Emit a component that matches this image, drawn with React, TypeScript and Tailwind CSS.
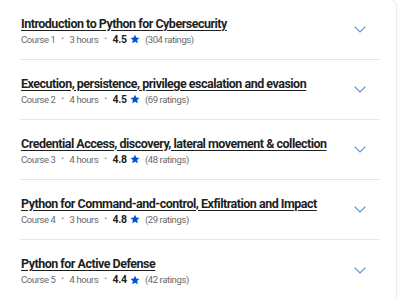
import React from "react";

const courses = [
  { title: "Introduction to Python for Cybersecurity", n: 1, hours: 3, rating: "4.5", count: 304 },
  { title: "Execution, persistence, privilege escalation and evasion", n: 2, hours: 4, rating: "4.5", count: 69 },
  { title: "Credential Access, discovery, lateral movement & collection", n: 3, hours: 4, rating: "4.8", count: 48 },
  { title: "Python for Command-and-control, Exfiltration and Impact", n: 4, hours: 3, rating: "4.8", count: 29 },
  { title: "Python for Active Defense", n: 5, hours: 4, rating: "4.4", count: 42 },
];

function Star() {
  return (
    <svg width="10" height="10" viewBox="0 0 24 24" className="ml-[3px] mr-[5px]">
      <path fill="#0056d2" d="M12 1.5l3.2 7.1 7.7.8-5.8 5.2 1.7 7.6L12 18.3l-6.8 3.9 1.7-7.6-5.8-5.2 7.7-.8z" />
    </svg>
  );
}

function Chevron() {
  return (
    <svg width="12" height="7" viewBox="0 0 12 7" fill="none">
      <path d="M.6.7L6 6l5.4-5.3" stroke="#5a8ed6" strokeWidth="1.1" />
    </svg>
  );
}

export default function App() {
  return (
    <div className="w-[400px] h-[298px] overflow-hidden bg-white" style={{ fontFamily: "Roboto, 'Liberation Sans', sans-serif" }}>
      <div className="w-[397px] border border-[#ececec] rounded-tr-[8px] border-l-0 -mt-px">
        {courses.map((c, i) => (
          <div key={i} className="pl-5 pr-[17px]">
            <div className={`flex items-center h-[60px] ${i < courses.length - 1 ? "border-b border-[#e6e6e6]" : ""}`}>
              <div className="flex-1 pl-px mt-[1px] whitespace-nowrap">
                <div className="text-[12.5px] font-bold text-[#1f1f1f] underline underline-offset-2 decoration-[1px] leading-[17px] tracking-[-0.5px]">
                  {c.title}
                </div>
                <div className="flex items-center text-[9.5px] text-[#6a6a6a] mt-[1px] leading-[13px] tracking-[-0.4px]">
                  <span>Course {c.n}</span>
                  <span className="mx-[6px] text-[7px]">•</span>
                  <span>{c.hours} hours</span>
                  <span className="mx-[6px] text-[7px]">•</span>
                  <span className="font-bold text-[#1f1f1f] text-[10.5px] tracking-[-0.2px]">{c.rating}</span>
                  <Star />
                  <span>({c.count} ratings)</span>
                </div>
              </div>
              <div className="w-[12px] mr-[13px] flex items-center">
                <Chevron />
              </div>
            </div>
          </div>
        ))}
      </div>
    </div>
  );
}
